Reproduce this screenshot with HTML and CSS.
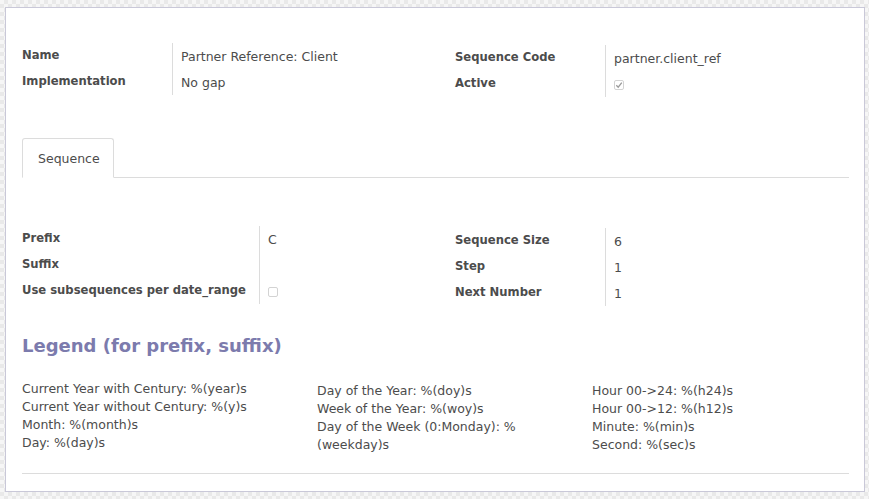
FILE: index.html
```html
<!DOCTYPE html>
<html>
<head>
<meta charset="utf-8">
<link rel="stylesheet" href="styles.css">
</head>
<body>
<div class="sheet">
  <div class="group group-top">
    <div class="fields">
      <div class="lbl">Name</div><div class="val">Partner Reference: Client</div>
      <div class="lbl">Implementation</div><div class="val">No gap</div>
    </div>
    <div class="fields fields-right">
      <div class="lbl">Sequence Code</div><div class="val">partner.client_ref</div>
      <div class="lbl">Active</div><div class="val"><span class="cb checked"><svg viewBox="0 0 10 10" width="10" height="10"><path d="M2.3 5.3 L4.2 7.2 L7.8 2.6" fill="none" stroke="#9a9a9a" stroke-width="1.3"/></svg></span></div>
    </div>
  </div>

  <div class="tabs">
    <div class="tab">Sequence</div>
  </div>

  <div class="group group-seq">
    <div class="fields fields-auto">
      <div class="lbl">Prefix</div><div class="val">C</div>
      <div class="lbl">Suffix</div><div class="val"></div>
      <div class="lbl">Use subsequences per date_range</div><div class="val"><span class="cb"></span></div>
    </div>
    <div class="fields fields-right">
      <div class="lbl">Sequence Size</div><div class="val">6</div>
      <div class="lbl">Step</div><div class="val">1</div>
      <div class="lbl">Next Number</div><div class="val">1</div>
    </div>
  </div>

  <h3 class="legend-title">Legend (for prefix, suffix)</h3>
  <div class="legend">
    <div class="lcol lcol1">
      <div>Current Year with Century: %(year)s</div>
      <div>Current Year without Century: %(y)s</div>
      <div>Month: %(month)s</div>
      <div>Day: %(day)s</div>
    </div>
    <div class="lcol lcol2">
      <div>Day of the Year: %(doy)s</div>
      <div>Week of the Year: %(woy)s</div>
      <div>Day of the Week (0:Monday): %<wbr>(weekday)s</div>
    </div>
    <div class="lcol lcol3">
      <div>Hour 00-&gt;24: %(h24)s</div>
      <div>Hour 00-&gt;12: %(h12)s</div>
      <div>Minute: %(min)s</div>
      <div>Second: %(sec)s</div>
    </div>
  </div>
  <div class="rule"></div>
</div>
</body>
</html>
```

FILE: styles.css
```css
html, body {
  margin: 0;
  padding: 0;
}
body {
  width: 869px;
  height: 499px;
  overflow: hidden;
  background-color: #f2f2f2;
  background-image: repeating-conic-gradient(#e9e9e9 0 25%, #f6f6f6 0 50%);
  background-size: 8px 8px;
  font-family: "DejaVu Sans", sans-serif;
  font-size: 12.5px;
  color: #4c4c4c;
  padding-top: 7px;
  box-sizing: border-box;
}
.sheet {
  margin-left: 5px;
  width: 860px;
  height: 485px;
  box-sizing: border-box;
  background: #fff;
  border: 1px solid #c9c8d8;
  padding: 35px 15px 0 16px;
}
.group {
  display: grid;
  grid-template-columns: 433px 1fr;
  align-items: start;
}
.fields {
  display: grid;
  grid-template-columns: 150px 1fr;
  grid-auto-rows: 26px;
}
.fields-right {
  margin-top: 2px;
}
.fields-auto {
  grid-template-columns: max-content 1fr;
}
.lbl {
  font-weight: bold;
  font-size: 11.6px;
  padding-top: 5px;
  padding-right: 8px;
  white-space: nowrap;
}
.fields-auto .lbl {
  padding-right: 13px;
}
.val {
  border-left: 1px solid #dcdcdc;
  padding-left: 8px;
  padding-top: 6px;
}
.cb {
  display: inline-block;
  width: 10px;
  height: 10px;
  border: 1px solid #d3d3d3;
  border-radius: 2px;
  box-sizing: border-box;
  position: relative;
  vertical-align: top;
  margin-top: 3px;
}
.cb svg {
  position: absolute;
  left: -1px;
  top: -1px;
}
.tabs {
  margin-top: 41px;
  border-bottom: 1px solid #dcdcdc;
  display: flex;
  height: 39px;
}
.tab {
  width: 92px;
  box-sizing: border-box;
  height: 40px;
  border: 1px solid #dcdcdc;
  border-bottom: 1px solid #fff;
  border-radius: 3px 3px 0 0;
  background: #fff;
  padding: 12px 0 0 15px;
}
.group-seq {
  margin-top: 48px;
}
.legend-title {
  margin: 28px 0 0 0;
  font-size: 18px;
  font-weight: bold;
  color: #7c7bad;
  line-height: 24px;
}
.legend {
  display: flex;
  margin-top: 22px;
}
.lcol {
  line-height: 18px;
}
.lcol1 { width: 295px; }
.lcol2 { width: 200px; margin-right: 75px; padding-top: 2px; }
.lcol3 { padding-top: 2px; }
.rule {
  margin-top: 19px;
  border-top: 1px solid #dcdcdc;
}
```
